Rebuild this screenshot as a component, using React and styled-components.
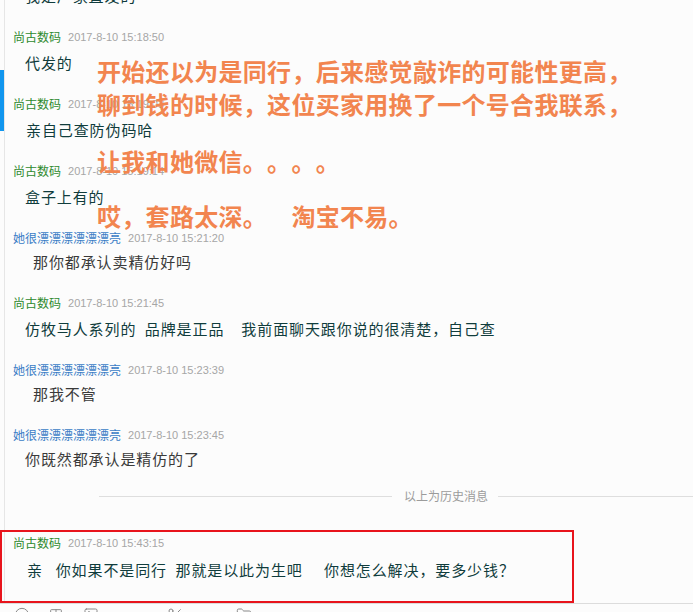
import React from 'react';
import styled, { createGlobalStyle } from 'styled-components';
import { Smile, Type, Image, Scissors, FolderClosed } from 'lucide-react';

const GlobalStyle = createGlobalStyle`
  html, body {
    margin: 0;
    padding: 0;
    background: #fcfcfc;
    overflow: hidden;
  }
`;

const Window = styled.div`
  position: relative;
  width: 693px;
  height: 612px;
  overflow: hidden;
  background: #fcfcfc;
  font-family: "Noto Sans CJK SC", "Liberation Sans", sans-serif;
  text-spacing-trim: space-all;
`;

const Main = styled.div`
  display: flex;
  height: 603px;
`;

const Rail = styled.div`
  width: 4px;
  flex: none;
`;

const RailMark = styled.div`
  margin-top: 70px;
  height: 61px;
  background: #1196ee;
`;

const Pane = styled.div`
  flex: 1;
  display: flex;
  flex-direction: column;
  border-left: 1px solid #e6e6e6;
`;

const History = styled.div`
  margin-top: -40px;
`;

const Message = styled.div`
  padding: 0 0 19px 8px;
`;

const Header = styled.div`
  display: flex;
  align-items: center;
  gap: 7px;
  height: 20px;
  line-height: 20px;
`;

const Name = styled.span`
  font-size: 12px;
  color: ${(p) => (p.$self ? '#2e8a2e' : '#3a7cc6')};
`;

const Time = styled.span`
  font-family: "Liberation Sans", Arial, sans-serif;
  font-size: 11px;
  color: #a6a6a6;
`;

const Body = styled.div`
  margin-top: ${(p) => p.$lead}px;
  padding-left: ${(p) => p.$indent}px;
  height: 24px;
  line-height: 24px;
  font-size: 15px;
  letter-spacing: 0.9px;
  white-space: pre;
  color: ${(p) => (p.$self ? '#103c3c' : '#3a3a3a')};
`;

const Divider = styled.div`
  display: flex;
  align-items: center;
  height: 12px;
  margin-left: 94px;
`;

const Rule = styled.div`
  height: 1px;
  background: #dedede;
  ${(p) => (p.$grow ? 'flex: 1;' : `width: ${p.$w}px;`)}
`;

const DividerText = styled.span`
  font-size: 12px;
  line-height: 12px;
  color: #9b9b9b;
  margin: 0 10px 0 12px;
`;

const Highlight = styled.div`
  margin: 28px 0 0 -5px;
  width: 574px;
  height: 73px;
  box-sizing: border-box;
  border: 2px solid #e8141c;
  padding: 1px 0 0 11px;
`;

const Toolbar = styled.div`
  display: flex;
  align-items: flex-start;
  height: 9px;
  border-top: 1px solid #dcdcdc;
  padding: 3px 0 0 14px;
  color: #8a8a8a;
`;

const Tool = styled.span`
  display: flex;
  margin-left: ${(p) => p.$ml || 0}px;
`;

const Overlay = styled.div`
  position: absolute;
  left: 97px;
  top: 54px;
  font-size: 24px;
  font-weight: 700;
  letter-spacing: 0.3px;
  color: #f2854f;
  white-space: pre;
  pointer-events: none;
  text-spacing-trim: space-all;
`;

const OverlayLine = styled.div`
  line-height: 33px;
  margin-top: ${(p) => p.$gap || 0}px;
`;

const SELF = '尚古数码';
const OTHER = '她很漂漂漂漂漂漂亮';

const history = [
  { self: true, time: '2017-8-10 15:18:12', text: '我是厂家直发的', indent: 12 },
  { self: true, time: '2017-8-10 15:18:50', text: '代发的', indent: 12 },
  { self: true, time: '2017-8-10 15:19:03', text: '亲自己查防伪码哈', indent: 13 },
  { self: true, time: '2017-8-10 15:19:14', text: '盒子上有的', indent: 12 },
  { self: false, time: '2017-8-10 15:21:20', text: '那你都承认卖精仿好吗', indent: 20 },
  {
    self: true,
    time: '2017-8-10 15:21:45',
    text: '仿牧马人系列的  品牌是正品    我前面聊天跟你说的很清楚，自己查',
    indent: 12,
  },
  { self: false, time: '2017-8-10 15:23:39', text: '那我不管', indent: 20 },
  { self: false, time: '2017-8-10 15:23:45', text: '你既然都承认是精仿的了', indent: 12 },
];

function Entry({ self, time, text, indent }) {
  return (
    <Message>
      <Header>
        <Name $self={self}>{self ? SELF : OTHER}</Name>
        <Time>{time}</Time>
      </Header>
      <Body $self={self} $lead={self ? 4 : 2} $indent={indent}>
        {text}
      </Body>
    </Message>
  );
}

export default function App() {
  return (
    <>
      <GlobalStyle />
      <Window>
        <Main>
          <Rail>
            <RailMark />
          </Rail>
          <Pane>
            <History>
              {history.map((m, i) => (
                <Entry key={i} {...m} />
              ))}
            </History>
            <Divider>
              <Rule $w={293} />
              <DividerText>以上为历史消息</DividerText>
              <Rule $grow />
            </Divider>
            <Highlight>
              <Header>
                <Name $self>{SELF}</Name>
                <Time>2017-8-10 15:43:15</Time>
              </Header>
              <Body $self $lead={5} $indent={14}>
                {'亲   你如果不是同行  那就是以此为生吧     你想怎么解决，要多少钱？'}
              </Body>
            </Highlight>
          </Pane>
        </Main>
        <Toolbar>
          <Tool><Smile size={16} strokeWidth={1.5} /></Tool>
          <Tool $ml={18}><Type size={16} strokeWidth={1.5} /></Tool>
          <Tool $ml={19}><Image size={16} strokeWidth={1.5} /></Tool>
          <Tool $ml={68}><Scissors size={16} strokeWidth={1.5} /></Tool>
          <Tool $ml={53}><FolderClosed size={16} strokeWidth={1.5} /></Tool>
        </Toolbar>
        <Overlay>
          <OverlayLine>开始还以为是同行，后来感觉敲诈的可能性更高，</OverlayLine>
          <OverlayLine>聊到钱的时候，这位买家用换了一个号合我联系，</OverlayLine>
          <OverlayLine $gap={24}>让我和她微信。。。。</OverlayLine>
          <OverlayLine $gap={22}>{'哎，套路太深。\u3000淘宝不易。'}</OverlayLine>
        </Overlay>
      </Window>
    </>
  );
}
